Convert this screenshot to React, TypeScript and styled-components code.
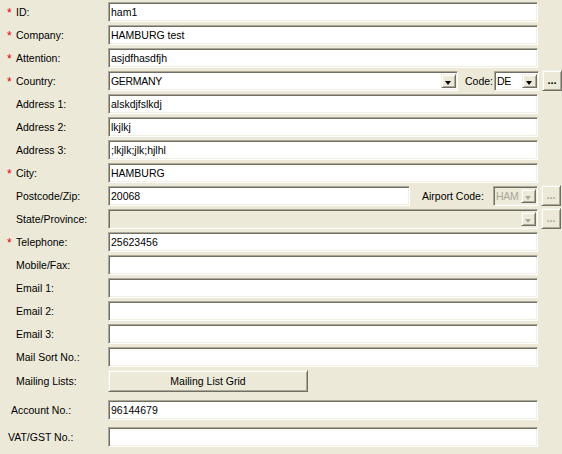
import styled, { createGlobalStyle, css } from "styled-components";

const GlobalStyle = createGlobalStyle`
  html, body {
    margin: 0;
    padding: 0;
    background: #ece9d8;
  }
  body {
    font-family: "Liberation Sans", Arial, sans-serif;
    font-size: 10.5px;
    color: #000;
  }
`;

type FieldDef = {
  label: string;
  required?: boolean;
  value?: string;
};

const simpleFields: FieldDef[] = [
  { label: "ID:", required: true, value: "ham1" },
  { label: "Company:", required: true, value: "HAMBURG test" },
  { label: "Attention:", required: true, value: "asjdfhasdfjh" },
];

const addressFields: FieldDef[] = [
  { label: "Address 1:", value: "alskdjfslkdj" },
  { label: "Address 2:", value: "lkjlkj" },
  { label: "Address 3:", value: ";lkjlk;jlk;hjlhl" },
  { label: "City:", required: true, value: "HAMBURG" },
];

const contactFields: FieldDef[] = [
  { label: "Telephone:", required: true, value: "25623456" },
  { label: "Mobile/Fax:" },
  { label: "Email 1:" },
  { label: "Email 2:" },
  { label: "Email 3:" },
  { label: "Mail Sort No.:" },
];

const App = () => {
  return (
    <>
      <GlobalStyle />
      <Form>
        {simpleFields.map((f) => (
          <TextRow key={f.label} {...f} />
        ))}
        <Row>
          <FieldLabel required>Country:</FieldLabel>
          <Inline>
            <Select $width={350}>
              <SelectText>GERMANY</SelectText>
              <DropButton />
            </Select>
            <SideLabel $gap={7} $width={29}>
              Code:
            </SideLabel>
            <Select $width={45}>
              <SelectText>DE</SelectText>
              <DropButton />
            </Select>
            <DotsButton>...</DotsButton>
          </Inline>
        </Row>
        {addressFields.map((f) => (
          <TextRow key={f.label} {...f} />
        ))}
        <Row>
          <FieldLabel>Postcode/Zip:</FieldLabel>
          <Inline>
            <TextBox $width={302}>20068</TextBox>
            <SideLabel $gap={12} $width={71}>
              Airport Code:
            </SideLabel>
            <Select $width={45} $disabled>
              <SelectText>HAM</SelectText>
              <DropButton $disabled />
            </Select>
            <DotsButton $disabled>...</DotsButton>
          </Inline>
        </Row>
        <Row>
          <FieldLabel>State/Province:</FieldLabel>
          <Inline>
            <Select $width={430} $disabled>
              <SelectText />
              <DropButton $disabled />
            </Select>
            <DotsButton $disabled>...</DotsButton>
          </Inline>
        </Row>
        {contactFields.map((f) => (
          <TextRow key={f.label} {...f} />
        ))}
        <Row $height={26}>
          <FieldLabel>Mailing Lists:</FieldLabel>
          <Inline>
            <GridButton>Mailing List Grid</GridButton>
          </Inline>
        </Row>
        <Row $spaced>
          <FieldLabel $indent={11}>Account No.:</FieldLabel>
          <Inline>
            <TextBox $width={430}>96144679</TextBox>
          </Inline>
        </Row>
        <Row $spaced>
          <FieldLabel $indent={8}>VAT/GST No.:</FieldLabel>
          <Inline>
            <TextBox $width={430} />
          </Inline>
        </Row>
      </Form>
    </>
  );
};
export default App;

const TextRow = ({ label, required, value }: FieldDef) => (
  <Row>
    <FieldLabel required={required}>{label}</FieldLabel>
    <Inline>
      <TextBox $width={430}>{value}</TextBox>
    </Inline>
  </Row>
);

const FieldLabel = ({
  children,
  required,
  $indent,
}: {
  children: React.ReactNode;
  required?: boolean;
  $indent?: number;
}) => (
  <LabelCell $indent={$indent}>
    {$indent === undefined && <Star>{required ? "*" : ""}</Star>}
    {children}
  </LabelCell>
);

const Form = styled.div`
  width: 562px;
  height: 454px;
  overflow: hidden;
  display: flex;
  flex-direction: column;
`;

const Row = styled.div<{ $height?: number; $spaced?: boolean }>`
  display: grid;
  grid-template-columns: 108px 1fr;
  align-items: center;
  height: ${(p) => p.$height ?? 23}px;
  margin-top: ${(p) => (p.$spaced ? 4 : 0)}px;
`;

const LabelCell = styled.div<{ $indent?: number }>`
  display: flex;
  align-items: center;
  padding-left: ${(p) => p.$indent ?? 7}px;
  white-space: nowrap;
`;

const Star = styled.span`
  display: inline-block;
  width: 9px;
  color: #e00000;
  font-size: 12px;
  line-height: 1;
  position: relative;
  top: 1px;
`;

const Inline = styled.div`
  display: flex;
  align-items: center;
`;

const sunken = css`
  box-sizing: border-box;
  border: 1px solid;
  border-color: #aca899 #ffffff #ffffff #aca899;
  box-shadow: inset 1px 1px 0 #716f64, inset -1px -1px 0 #f1efe2;
`;

const raised = css`
  box-sizing: border-box;
  background: #ece9d8;
  border: 1px solid;
  border-color: #f1efe2 #716f64 #716f64 #f1efe2;
  box-shadow: inset 1px 1px 0 #ffffff, inset -1px -1px 0 #aca899;
`;

const TextBox = styled.div<{ $width: number }>`
  ${sunken};
  width: ${(p) => p.$width}px;
  height: 20px;
  background: #fff;
  padding: 3px 2px 0;
  white-space: nowrap;
  overflow: hidden;
`;

const Select = styled.div<{ $width: number; $disabled?: boolean }>`
  ${sunken};
  width: ${(p) => p.$width}px;
  height: 20px;
  display: flex;
  align-items: stretch;
  padding: 2px 1px;
  background: ${(p) => (p.$disabled ? "#ece9d8" : "#fff")};
  color: ${(p) => (p.$disabled ? "#aca899" : "#000")};
`;

const SelectText = styled.span`
  flex: 1;
  min-width: 0;
  padding: 1px 0 0 1px;
  letter-spacing: -0.3px;
  white-space: nowrap;
  overflow: hidden;
`;

const DropButton = styled.span<{ $disabled?: boolean }>`
  ${raised};
  width: 15px;
  flex: none;
  position: relative;
  &::after {
    content: "";
    position: absolute;
    left: 3px;
    top: 6px;
    border-left: 3.5px solid transparent;
    border-right: 3.5px solid transparent;
    border-top: 4px solid ${(p) => (p.$disabled ? "#aca899" : "#000")};
  }
`;

const SideLabel = styled.span<{ $gap: number; $width: number }>`
  margin-left: ${(p) => p.$gap}px;
  width: ${(p) => p.$width}px;
  white-space: nowrap;
`;

const DotsButton = styled.div<{ $disabled?: boolean }>`
  ${raised};
  width: 20px;
  height: 21px;
  margin-left: 3px;
  display: flex;
  align-items: flex-end;
  justify-content: center;
  padding-bottom: 4px;
  font-size: 11px;
  font-weight: bold;
  line-height: 1;
  color: ${(p) => (p.$disabled ? "#aca899" : "#000")};
`;

const GridButton = styled.div`
  ${raised};
  width: 200px;
  height: 22px;
  display: flex;
  align-items: center;
  justify-content: center;
`;
